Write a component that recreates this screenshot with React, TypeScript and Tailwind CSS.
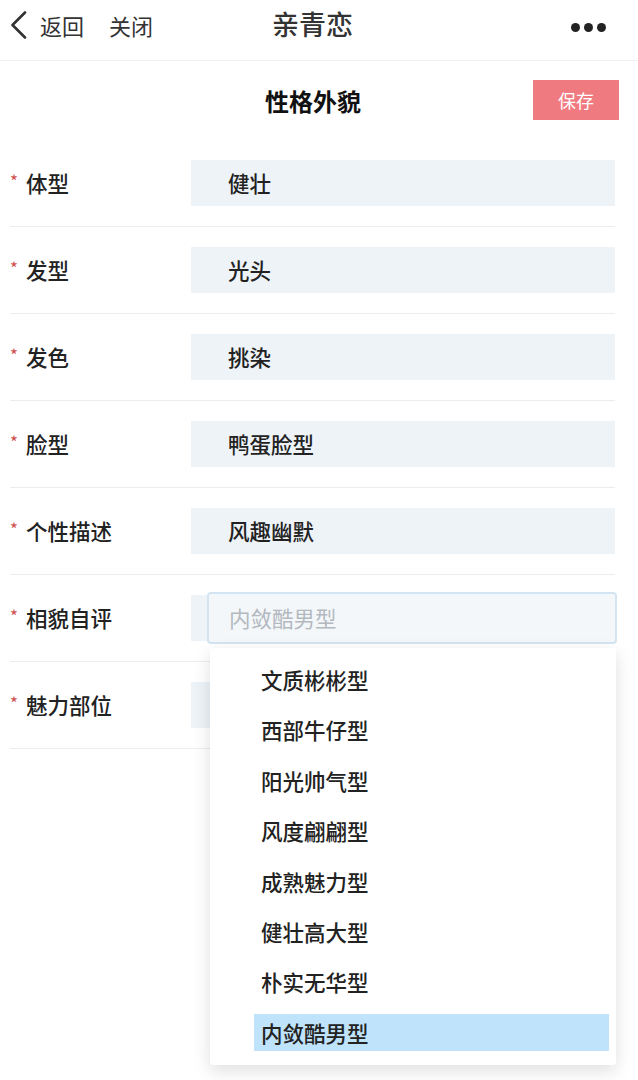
const fields = [
	{ label: "体型", value: "健壮" },
	{ label: "发型", value: "光头" },
	{ label: "发色", value: "挑染" },
	{ label: "脸型", value: "鸭蛋脸型" },
	{ label: "个性描述", value: "风趣幽默" },
];

const options = [
	"文质彬彬型",
	"西部牛仔型",
	"阳光帅气型",
	"风度翩翩型",
	"成熟魅力型",
	"健壮高大型",
	"朴实无华型",
	"内敛酷男型",
];

function Label({ text }: { text: string }) {
	return (
		<div className="flex w-[181px] items-center">
			<span className="mr-[3px] w-[13px] pb-[6px] text-[17px] leading-none text-[#d0504e]">*</span>
			<span className="text-[21.5px] font-medium text-[#222]">{text}</span>
		</div>
	);
}

export default function App() {
	return (
		<div
			className="relative min-h-[1080px] w-[638px] bg-white text-[#222]"
			style={{ fontFamily: '"Noto Sans CJK SC", "Noto Sans", sans-serif' }}
		>
			{/* top bar */}
			<header className="relative flex h-[61px] items-center border-b border-[#f0f0f0] pb-[10px] pl-[10px] pr-[32px]">
				<svg width="17" height="28" viewBox="0 0 17 28" fill="none" className="text-[#333]">
					<polyline points="15,1.5 2.5,14 15,26.5" stroke="currentColor" strokeWidth="2.6" strokeLinecap="round" strokeLinejoin="round" />
				</svg>
				<span className="ml-[13px] text-[22px] text-[#333]">返回</span>
				<span className="ml-[25px] text-[22px] text-[#333]">关闭</span>
				<div className="absolute left-[272px] top-[4px] text-[27px] font-medium text-[#333]">亲青恋</div>
				<div className="ml-auto flex gap-[4px] pt-[4px]">
					<span className="h-[9px] w-[9px] rounded-full bg-[#222]" />
					<span className="h-[9px] w-[9px] rounded-full bg-[#222]" />
					<span className="h-[9px] w-[9px] rounded-full bg-[#222]" />
				</div>
			</header>

			{/* section title */}
			<div className="relative flex h-[79px] items-center justify-center pr-[12px]">
				<h1 className="text-[24px] font-bold text-[#111]">性格外貌</h1>
				<button className="absolute right-[19px] top-[19px] h-[40px] w-[86px] bg-[#ef7a80] text-[18px] text-white">
					保存
				</button>
			</div>

			<div className="pl-[10px] pr-[23px]">
				{fields.map((f) => (
					<div key={f.label} className="flex items-center border-b border-[#ececec] py-[20px]">
						<Label text={f.label} />
						<div className="flex h-[46px] flex-1 items-center bg-[#eef3f7] pl-[37px] text-[21.5px] font-medium text-[#222]">
							{f.value}
						</div>
					</div>
				))}

				<div className="flex items-center border-b border-[#ececec] py-[20px]">
					<Label text="相貌自评" />
					<div className="relative h-[46px] flex-1 bg-[#eef3f7]">
						<div className="absolute -bottom-[3px] -right-[2px] -top-[3px] left-[16px] flex items-center rounded-[4px] border-2 border-[#d3e5f3] bg-[#f3f7fa] pl-[20px] text-[21.5px] text-[#b4b9bf]">
							内敛酷男型
						</div>
					</div>
				</div>

				<div className="flex items-center border-b border-[#ececec] py-[20px]">
					<Label text="魅力部位" />
					<div className="h-[46px] flex-1 bg-[#eef3f7]" />
				</div>
			</div>

			{/* dropdown */}
			<div className="absolute left-[210px] top-[648px] w-[406px] rounded-[3px] bg-white py-[7px] pl-[44px] pr-[7px] shadow-[0_6px_18px_rgba(0,0,0,0.13)]">
				{options.map((o, i) => (
					<div key={o} className="flex h-[50.4px] items-center">
						<div
							className={
								i === options.length - 1
									? "flex h-[37px] w-full items-center bg-[#bfe3fa] pl-[7px] text-[21.5px] font-medium text-[#222]"
									: "flex h-[37px] w-full items-center pl-[7px] text-[21.5px] font-medium text-[#222]"
							}
						>
							{o}
						</div>
					</div>
				))}
			</div>
		</div>
	);
}
